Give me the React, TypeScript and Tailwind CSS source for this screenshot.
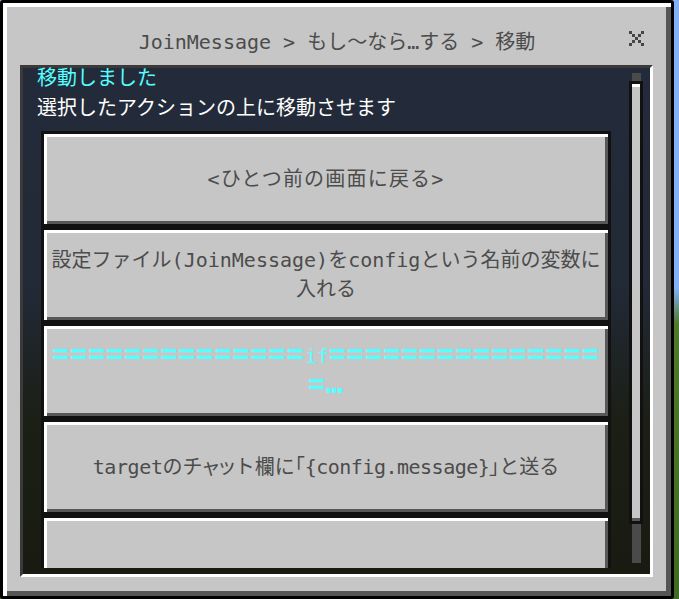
import React from "react";

function CloseIcon() {
  const cells: [number, number][] = [
    [0, 0], [4, 0], [1, 1], [3, 1], [2, 2], [1, 3], [3, 3], [0, 4], [4, 4],
  ];
  return (
    <svg width="15" height="15" viewBox="0 0 15 15" shapeRendering="crispEdges">
      {cells.map(([x, y], i) => (
        <rect key={i} x={x * 3} y={y * 3} width="3" height="3" fill="#464646" />
      ))}
    </svg>
  );
}

function McButton({ children, cyan }: { children?: React.ReactNode; cyan?: boolean }) {
  return (
    <div
      className={
        cyan
          ? "h-[96px] shrink-0 border-[3px] border-[#111111] bg-[#c6c6c6] shadow-[inset_3px_3px_0_#ffffff,inset_-3px_-3px_0_#585858] flex items-center justify-center text-center text-[20px] leading-[30px] text-[#55ffff] whitespace-nowrap"
          : "h-[96px] shrink-0 border-[3px] border-[#111111] bg-[#c6c6c6] shadow-[inset_3px_3px_0_#ffffff,inset_-3px_-3px_0_#585858] flex items-center justify-center text-center text-[20px] leading-[29px] text-[#4c4c4c] whitespace-nowrap"
      }
    >
      <div>{children}</div>
    </div>
  );
}

export default function App() {
  return (
    <div className="w-[679px] h-[599px] overflow-hidden bg-[linear-gradient(to_bottom,#86b1f7_0%,#86b1f7_48%,#4e7a2c_54%,#3f6a25_100%)] font-['DejaVu_Sans_Mono','Noto_Sans_CJK_JP',monospace]">
      <div className="w-[674px] h-[599px] rounded-[3px] border-[3px] border-black bg-[#c6c6c6] shadow-[inset_4px_4px_0_#ffffff,inset_-5px_-5px_0_#555555] flex flex-col">
        {/* title bar */}
        <div className="h-[62px] shrink-0 grid grid-cols-[1fr_auto_1fr]">
          <div />
          <div className="pt-[27px] text-[20px] leading-[24px] text-[#4c4c4c] whitespace-nowrap">
            {"JoinMessage > もし〜なら…する > 移動"}
          </div>
          <div className="flex justify-end pt-[28px] pr-[27px]">
            <CloseIcon />
          </div>
        </div>

        {/* content panel */}
        <div className="ml-[17px] mr-[18px] h-[512px] shrink-0 border-[3px] border-t-[#3a3a3a] border-l-[#3a3a3a] border-r-white border-b-white bg-[linear-gradient(to_bottom,#232b3a_0%,#222a38_42%,#1f2428_55%,#1b1f15_70%,#191b12_100%)] flex">
          <div className="w-[588px] h-[500px] shrink-0 flex flex-col">
            <div className="pl-[14px] text-[20px] leading-[22px] -mt-[1px] text-[#55ffff] whitespace-nowrap">
              移動しました
            </div>
            <div className="pl-[14px] mt-[8px] text-[20px] leading-[22px] text-white whitespace-nowrap">
              選択したアクションの上に移動させます
            </div>
            <div className="ml-[18px] mt-[12px] w-[570px] h-[437px] overflow-hidden flex flex-col">
              <McButton>
                <span className="tracking-[1.2px]">{"<ひとつ前の画面に戻る>"}</span>
              </McButton>
              <McButton>
                設定ファイル(JoinMessage)をconfigという名前の変数に
                <br />
                入れる
              </McButton>
              <McButton cyan>
                <span className="text-[28px] leading-[20px] tracking-[1.2px] font-bold">==============</span>
                if
                <span className="text-[28px] leading-[20px] tracking-[1.2px] font-bold">===============</span>
                <br />
                <span className="text-[28px] leading-[20px] tracking-[1.2px] font-bold">=…</span>
              </McButton>
              <McButton>
                <span className="tracking-[-0.4px]">target</span>のチ
                <span className="[font-feature-settings:'palt']">ャッ</span>
                ト欄に
                <span className="[font-feature-settings:'palt']">「</span>
                <span className="tracking-[-0.5px]">{"{config.message}"}</span>
                <span className="[font-feature-settings:'palt']">」</span>
                と送る
              </McButton>
              <McButton />
            </div>
          </div>

          {/* scrollbar */}
          <div className="ml-[18px] mt-[5px] w-[14px] shrink-0 flex flex-col">
            <div className="ml-[3px] w-[9px] h-[8px] bg-[#4a4a4a]" />
            <div className="w-[14px] h-[443px] border-[3px] border-[#111111] bg-[#c6c6c6] shadow-[inset_0_3px_0_#ffffff,inset_0_-3px_0_#585858]" />
            <div className="ml-[3px] w-[9px] h-[39px] bg-[#4a4a4a]" />
          </div>
        </div>
      </div>
    </div>
  );
}
